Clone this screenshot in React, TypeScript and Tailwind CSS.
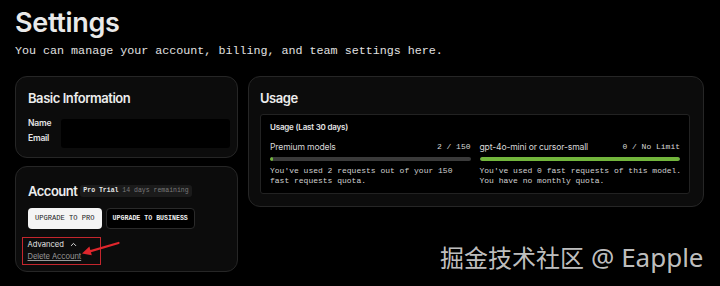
import { ChevronUp } from "lucide-react"

const sans = "font-['Inter','Noto_Sans',sans-serif]"
const mono = "font-['Liberation_Mono','DejaVu_Sans_Mono',monospace]"

function UsageItem({
  label,
  count,
  percent,
  lines,
}: {
  label: string
  count: string
  percent: number
  lines: string[]
}) {
  return (
    <div className="flex flex-col">
      <div className="flex items-center justify-between h-[14px]">
        <span className={`${sans} text-[8.6px] tracking-[-0.15px] text-[#d8d8d8]`}>{label}</span>
        <span className={`${mono} text-[8px] text-[#d8d8d8]`}>{count}</span>
      </div>
      <div className="mt-[3px] h-[3.5px] rounded-full bg-[#3a3a3a] overflow-hidden">
        <div className="h-full rounded-full bg-[#72b53c]" style={{ width: `${percent}%` }} />
      </div>
      <div className={`${mono} mt-[5px] text-[8px] leading-[10.5px] whitespace-nowrap text-[#d0d0d0]`}>
        {lines.map((l) => (
          <div key={l}>{l}</div>
        ))}
      </div>
    </div>
  )
}

export default function App() {
  return (
    <div className="relative w-[720px] h-[286px] overflow-hidden bg-black px-[15px] pt-[6px]">
      <h1 className={`${sans} text-[27px] leading-[34px] font-semibold text-[#e9e9e9] tracking-[-0.3px]`}>
        Settings
      </h1>
      <p className={`${mono} mt-[4px] text-[11.7px] leading-[14px] text-[#e0e0e0]`}>
        You can manage your account, billing, and team settings here.
      </p>

      <div className="mt-[18px] grid grid-cols-[223px_456px] gap-[10px] items-start">
        <div className="flex flex-col gap-[8px]">
          {/* Basic information */}
          <div className="h-[82px] rounded-[12px] border border-[#262626] bg-[#0c0c0c] pl-[12px] pr-[7px] pt-[13px]">
            <h2 className={`${sans} text-[13px] leading-[16px] font-semibold tracking-[-0.45px] text-[#ededed]`}>
              Basic Information
            </h2>
            <div className="mt-[13px] flex items-start gap-[10px]">
              <div className={`${sans} -mt-[1px] flex flex-col gap-[5px] text-[8.5px] leading-[10px] font-semibold tracking-[-0.2px] text-[#e5e5e5]`}>
                <span>Name</span>
                <span>Email</span>
              </div>
              <div className="h-[29px] flex-1 rounded-[3px] bg-black" />
            </div>
          </div>

          {/* Account */}
          <div className="h-[106px] rounded-[12px] border border-[#262626] bg-[#0c0c0c] px-[12px] pt-[16px]">
            <div className="flex items-center gap-[3px] h-[16px]">
              <h2 className={`${sans} text-[13px] leading-[16px] font-semibold tracking-[-0.5px] text-[#ededed]`}>Account</h2>
              <span className={`${mono} rounded-[3px] bg-[#1b1b1b] px-[3px] text-[6.5px] leading-[12px]`}>
                <span className="font-bold text-[#e5e5e5]">Pro Trial</span>{" "}
                <span className="text-[#7a7a7a]">14 days remaining</span>
              </span>
            </div>
            <div className="mt-[9px] flex gap-[4px]">
              <button className={`${mono} h-[21px] rounded-[4px] bg-[#f4f4f4] px-[7px] text-[7.1px] text-[#222]`}>
                UPGRADE TO PRO
              </button>
              <button className={`${mono} h-[21px] rounded-[4px] border border-[#2a2a2a] bg-black px-[6px] text-[6.6px] font-bold text-[#eee]`}>
                UPGRADE TO BUSINESS
              </button>
            </div>
            <div className="relative mt-[8px] -ml-[6px] w-[79px] h-[28px] border-[1.5px] border-[#c4262d] pl-[4.5px] pt-[1px]">
              <div className={`${sans} flex items-center gap-[5px] text-[7.6px] leading-[11px] text-[#e5e5e5]`}>
                Advanced <ChevronUp size={9} strokeWidth={2.5} />
              </div>
              <div className={`${sans} mt-[1px] text-[7.6px] leading-[11px] tracking-[-0.1px] text-[#9a9a9a] underline`}>
                Delete Account
              </div>
              <svg className="absolute left-[55px] top-[2px]" width="46" height="22" viewBox="0 0 46 22">
                <path d="M40.5 3 L11 11.6" stroke="#e0262c" strokeWidth="2.2" strokeLinecap="round" />
                <path d="M4 13.5 L11.4 6.6 L13.8 15.2 Z" fill="#e0262c" />
              </svg>
            </div>
          </div>
        </div>

        {/* Usage */}
        <div className="h-[131px] rounded-[12px] border border-[#262626] bg-[#0c0c0c] pl-[11px] pr-[13px] pt-[13px]">
          <h2 className={`${sans} text-[13px] leading-[16px] font-semibold tracking-[-0.45px] text-[#ededed]`}>Usage</h2>
          <div className="mt-[8px] h-[80px] rounded-[3px] border border-[#222] bg-black px-[9px] pt-[6px]">
            <div className={`${sans} text-[8px] leading-[12px] font-semibold tracking-[-0.2px] text-[#e5e5e5]`}>
              Usage (Last 30 days)
            </div>
            <div className="mt-[7px] grid grid-cols-2 gap-[9px]">
              <UsageItem
                label="Premium models"
                count="2 / 150"
                percent={1.5}
                lines={["You've used 2 requests out of your 150", "fast requests quota."]}
              />
              <UsageItem
                label="gpt-4o-mini or cursor-small"
                count="0 / No Limit"
                percent={100}
                lines={["You've used 0 fast requests of this model.", "You have no monthly quota."]}
              />
            </div>
          </div>
        </div>
      </div>

      {/* watermark */}
      <div className="absolute left-[440px] top-[242px] flex items-baseline gap-[7px] font-['Noto_Sans','Noto_Sans_CJK_SC',sans-serif] leading-[30px] text-[#d8d8d8]/90">
        <span className="text-[24px]">掘金技术社区</span>
        <span className="text-[26px]">@ Eapple</span>
      </div>
    </div>
  )
}
